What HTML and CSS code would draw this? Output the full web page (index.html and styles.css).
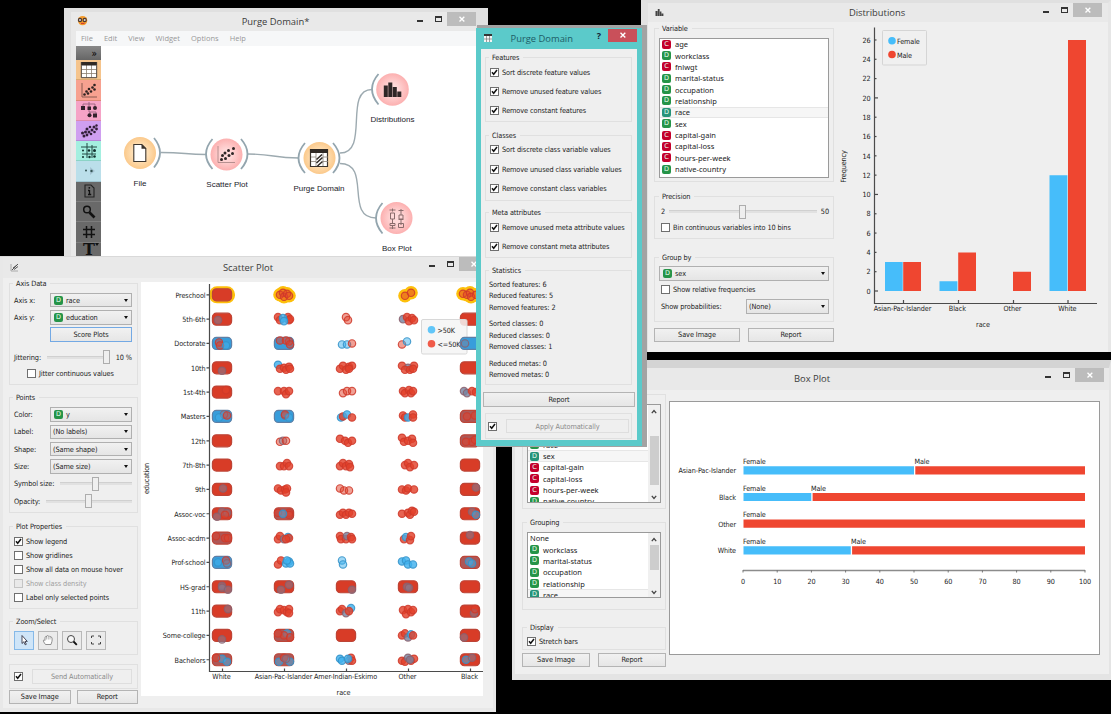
FILE: index.html
```html
<!DOCTYPE html>
<html lang="en">
<head>
<meta charset="utf-8">
<title>Orange - Purge Domain</title>
<link rel="stylesheet" href="styles.css">
</head>
<body>
<svg class="defs" width="0" height="0" aria-hidden="true">
  <symbol id="tick" viewBox="0 0 9 9"><path d="M2 4.2 3.7 6.3 7 2" fill="none" stroke="#111" stroke-width="1.5"/></symbol>
  <symbol id="up" viewBox="0 0 8 8"><path d="M1.8 5.2 4 2.6 6.2 5.2" fill="none" stroke="#444" stroke-width="1.3"/></symbol>
  <symbol id="down" viewBox="0 0 8 8"><path d="M1.8 2.8 4 5.4 6.2 2.8" fill="none" stroke="#444" stroke-width="1.3"/></symbol>
  <symbol id="cross" viewBox="0 0 8 8"><path d="M1.5 1.8 6.3 6.4M6.3 1.8 1.5 6.4" fill="none" stroke="#fff" stroke-width="1.4"/></symbol>
</svg>

<main class="desktop">

<section class="window w-canvas">
  <header class="titlebar">
    <span class="app-icon"><svg width="11" height="11" viewBox="0 0 11 11"><circle cx="5.6" cy="5.6" r="4.7" fill="#f49a2a"/><circle cx="3" cy="5" r="2.2" fill="#4a3a34"/><circle cx="7.7" cy="5" r="2.2" fill="#4a3a34"/><circle cx="3" cy="5" r="1" fill="#e8d9c8"/><circle cx="7.7" cy="5" r="1" fill="#e8d9c8"/><path d="M4 8.4h3.5" stroke="#c33" stroke-width="1"/></svg></span>
    <h1 class="title">Purge Domain*</h1>
    <div class="controls"><i class="min"></i><i class="max"></i><i class="close"><svg width="8" height="8"><use href="#cross"/></svg></i></div>
  </header>
  <nav class="menubar"><span>File</span><span>Edit</span><span>View</span><span>Widget</span><span>Options</span><span>Help</span></nav>
  <div class="workspace">
    <aside class="toolbox">
      <div class="tool head">»</div>
      <div class="tool t-data"><svg width="18" height="18" viewBox="0 0 18 18"><path d="M1 1h16v16H1z" fill="#fff"/><path d="M1.5 5v11.500h15V5M6.500 4v13M11.500 4v13M1 8.500h16M1 12.500h16" fill="none" stroke="#8a7f70" stroke-width=".8"/><path d="M1 1h16v3.500H1z" fill="#2f2924"/><path d="M1.300 1v15.700h15.400V1" fill="none" stroke="#4b443c" stroke-width=".8"/></svg></div>
      <div class="tool t-vis"><svg width="18" height="18" viewBox="0 0 18 18"><path d="M2 2v14h15" fill="none" stroke="#8a5a50" stroke-width="1"/><g fill="#2e2220"><circle cx="4.500" cy="13.500" r="1.300"/><circle cx="6.500" cy="10.500" r="1.300"/><circle cx="8" cy="12.500" r="1.300"/><circle cx="9" cy="8" r="1.300"/><circle cx="11" cy="10.500" r="1.300"/><circle cx="12.500" cy="6.500" r="1.300"/><circle cx="14.500" cy="8.500" r="1.300"/><circle cx="14.500" cy="4" r="1.300"/></g></svg></div>
      <div class="tool t-model"><svg width="18" height="18" viewBox="0 0 18 18"><path d="M3 6V3h12v3M9 1v5M9 9v2h7v2M10 11v3" fill="none" stroke="#8e5c77" stroke-width=".8"/><g fill="#33222c"><path d="M1 5h4v4H1zM7.500 5.500h3.500v3.500H7.500zM13 12.500h4v4h-4z"/><circle cx="15" cy="7" r="2"/><circle cx="9.500" cy="14.300" r="2"/></g></svg></div>
      <div class="tool t-unsup"><svg width="18" height="18" viewBox="0 0 18 18"><g fill="#33203a"><circle cx="2.500" cy="11" r="1.500"/><circle cx="4" cy="14" r="1.500"/><circle cx="5.500" cy="10" r="1.500"/><circle cx="7" cy="13" r="1.400"/><circle cx="7" cy="7" r="1.500"/><circle cx="9" cy="10" r="1.500"/><circle cx="11" cy="12" r="1.300"/><circle cx="10" cy="5" r="1.300"/><circle cx="12" cy="8" r="1.500"/><circle cx="14.500" cy="10" r="1.300"/><circle cx="14" cy="5" r="1.500"/><circle cx="16.500" cy="7" r="1.400"/><circle cx="16.500" cy="3.500" r="1.200"/></g></svg></div>
      <div class="tool t-eval"><svg width="18" height="18" viewBox="0 0 18 18"><path d="M1 5h16M7 1v15M2 12h14M12 3v13" stroke="#234a45" stroke-width="1"/><g fill="#12302c"><circle cx="3" cy="8.500" r="1"/><circle cx="3" cy="15" r="1"/><circle cx="9" cy="8.500" r="1.200"/><circle cx="14.500" cy="8.500" r="1.500"/><circle cx="14.500" cy="14.500" r="1.300"/><circle cx="9.500" cy="15" r="1.200"/></g></svg></div>
      <div class="tool t-extra"><svg width="18" height="18" viewBox="0 0 18 18"><path d="M10 5l5 4-5 4z" fill="#a5c4d2"/><circle cx="6" cy="8.500" r="1" fill="#355"/><circle cx="11.500" cy="9" r="1.200" fill="#355"/></svg></div>
      <div class="tool t-info"><svg width="18" height="18" viewBox="0 0 18 18"><path d="M5 3h6l3 3v9H5z" fill="none" stroke="#222" stroke-width="1.100"/><path d="M9.500 8v4.500M8 12.500h3.200M8 8.500h1.500" stroke="#111" stroke-width="1.300"/><circle cx="9.300" cy="5.800" r=".9" fill="#111"/></svg></div>
      <div class="tool"><svg width="18" height="18" viewBox="0 0 18 18"><circle cx="7" cy="6.500" r="3.300" fill="none" stroke="#111" stroke-width="1.500"/><path d="M9.500 9.500 14.500 14.500" stroke="#111" stroke-width="2.600"/></svg></div>
      <div class="tool"><svg width="18" height="18" viewBox="0 0 18 18"><path d="M6.500 3v12M11.500 3v12M3 6.500h12M3 11.500h12" stroke="#111" stroke-width="1.500"/></svg></div>
      <div class="tool last"><b class="t-letter">T</b><i class="t-arrow"></i></div>
    </aside>
    <svg class="flow" width="375" height="211" viewBox="101 46 375 211">
      <defs>
        <radialGradient id="go"><stop offset=".3" stop-color="#ffe7c4"/><stop offset="1" stop-color="#fbc98b"/></radialGradient>
        <radialGradient id="gr"><stop offset=".3" stop-color="#ffd9d9"/><stop offset="1" stop-color="#fcb0b0"/></radialGradient>
      </defs>
      <g fill="none" stroke="#9daab0" stroke-width="1.400">
        <path d="M161 152.500C185 152.500 185 154.500 206 154.500"/>
        <path d="M248 154C275 154 272 158 299 158"/>
        <path d="M340 153C370 153 343 89.500 372 89.500"/>
        <path d="M340 163.500C372 163.500 344 218 376 218"/>
      </g>
      <g fill="none" stroke="#93a5ae" stroke-width="1.800">
        <path d="M154 138Q166 152.500 154 167.500"/>
        <path d="M212.500 139Q199.500 154 212.500 169"/>
        <path d="M241 139Q254 154 241 169"/>
        <path d="M305 143Q292 158 305 173"/>
        <path d="M333 143Q346 158 333 173"/>
        <path d="M378.500 74Q365.500 89 378.500 104.500"/>
        <path d="M382.500 203Q369.500 218 382.500 233.500"/>
      </g>
      <circle cx="140" cy="153" r="16" fill="url(#go)"/>
      <circle cx="226.500" cy="154.500" r="16" fill="url(#gr)"/>
      <circle cx="319.500" cy="158" r="16" fill="url(#go)"/>
      <circle cx="392.500" cy="89.500" r="16.300" fill="url(#gr)"/>
      <circle cx="396.500" cy="218" r="16" fill="url(#gr)"/>
      <path d="M133.800 144.500h8l4 4v13h-12z" fill="#fff" stroke="#3c352e" stroke-width="1.100"/><path d="M141.500 144v4.800h4.800z" fill="#3c352e"/>
      <path d="M218 146v16.500h17" fill="none" stroke="#a58080" stroke-width=".8"/>
      <g fill="#2f2626"><circle cx="221.500" cy="159.500" r="1.500"/><circle cx="222.500" cy="155.500" r="1.500"/><circle cx="225.500" cy="158.500" r="1.500"/><circle cx="225" cy="153" r="1.500"/><circle cx="229" cy="155.500" r="1.500"/><circle cx="228.500" cy="150.500" r="1.500"/><circle cx="232.500" cy="153.500" r="1.500"/><circle cx="233.500" cy="148.500" r="1.500"/></g>
      <path d="M310.500 149.500h17v17h-17z" fill="#fff" stroke="#3a332c" stroke-width="1.200"/><path d="M310 149h18v4h-18z" fill="#2f2924"/><path d="M311 157h5M311 161.500h5M323 157h5M323 161.500h5M316 153v13M323 153v13" stroke="#8b8378" stroke-width=".8"/><path d="M316.500 159.500 322 154.500M316.500 163 322.500 157.500M317.500 166 322.500 161.500" stroke="#2f2924" stroke-width="1.500"/>
      <path d="M383.800 85.500h4v11.500h-4zM388.300 82.500h4v14.500h-4zM392.800 87h4v10h-4zM397.300 91.500h4v5.500h-4z" fill="#2f2626"/>
      <g stroke="#8a6c6c" stroke-width="1" fill="none"><path d="M392.500 208.500v3M392.500 219v4M401 209v6M401 220v5"/><path d="M390.500 213h4v6h-4zM389.500 210h6M389.500 228h6M390 223.500h5v2h-5zM392.500 225v4"/><path d="M398.500 210.500h5M399 215h4v4h-4zM398.500 223.500h5v4h-5zM398.500 219.500h5"/></g>
      <g class="node-label"><text x="140" y="185.500">File</text><text x="227" y="187">Scatter Plot</text><text x="319" y="191">Purge Domain</text><text x="392.500" y="122">Distributions</text><text x="396.800" y="251">Box Plot</text></g>
    </svg>
  </div>
</section>

<section class="window w-dist">
  <header class="titlebar">
    <span class="app-icon"><svg width="9" height="9" viewBox="0 0 9 9"><path d="M.5 3h2v5h-2zM2.800 1h1.800v7H2.800zM4.900 3.500h1.500V8H4.900zM6.600 5.500h1.800V8H6.600z" fill="#444"/></svg></span>
    <h1 class="title">Distributions</h1>
    <div class="controls"><i class="min"></i><i class="max"></i><i class="close"><svg width="8" height="8"><use href="#cross"/></svg></i></div>
  </header>
  <div class="client">
    <div class="panel">
      <div class="group g-variable"><h2 class="legend">Variable</h2>
        <ul class="list">
          <li><b class="c">C</b>age</li><li><b>D</b>workclass</li><li><b class="c">C</b>fnlwgt</li><li><b>D</b>marital-status</li><li><b>D</b>occupation</li><li><b>D</b>relationship</li><li class="on"><b>D</b>race</li><li><b>D</b>sex</li><li><b class="c">C</b>capital-gain</li><li><b class="c">C</b>capital-loss</li><li><b class="c">C</b>hours-per-week</li><li><b>D</b>native-country</li>
        </ul>
      </div>
      <div class="group g-precision"><h2 class="legend">Precision</h2>
        <div class="row"><span>2</span><span class="slider mid"><i></i></span><span>50</span></div>
        <label class="check"><i class="box"></i>Bin continuous variables into 10 bins</label>
      </div>
      <div class="group g-groupby"><h2 class="legend">Group by</h2>
        <div class="combo"><b>D</b>sex</div>
        <label class="check"><i class="box"></i>Show relative frequencies</label>
        <div class="row prob"><span>Show probabilities:</span><div class="combo">(None)</div></div>
      </div>
      <div class="buttons"><button>Save Image</button><button>Report</button></div>
    </div>
    <svg class="plot" id="dist" width="266" height="325" viewBox="836 22 266 325">
      <g class="axis"><path d="M874.500 27.500V303.500H1097M903.500 303v-3M958.500 303v-3M1013.500 303v-3M1068 303v-3"/></g>
      <g fill="#46bdfa"><path d="M885 262h17.700v29H885zM939.500 281.300h17.900v9.700h-17.900zM1049.500 175.200h17.900V291h-17.900z"/></g>
      <g fill="#ef4630"><path d="M903.200 262H921v29h-17.800zM958.200 252.400H976V291h-17.800zM1013 271.700h18V291h-18zM1068 40h18v251h-18z"/></g>
      <rect x="882.500" y="30.500" width="44" height="34.500" rx="1" fill="#f0f0f0" stroke="#d5d5d5"/>
      <circle cx="892" cy="40.800" r="3.800" fill="#46bdfa"/><circle cx="892" cy="54.500" r="3.800" fill="#ef4630"/>
      <text x="897" y="43.800">Female</text><text x="897" y="57.700">Male</text>
      <g class="mid"><text x="902.500" y="311">Asian-Pac-Islander</text><text x="957.300" y="311">Black</text><text x="1012.500" y="311">Other</text><text x="1067.300" y="311">White</text><text x="983" y="326.500">race</text><text transform="translate(846 166.500) rotate(-90)">Frequency</text></g>
    </svg>
  </div>
</section>

<section class="window w-box">
  <header class="titlebar">
    <span class="app-icon"></span>
    <h1 class="title">Box Plot</h1>
    <div class="controls"><i class="min"></i><i class="max"></i><i class="close"><svg width="8" height="8"><use href="#cross"/></svg></i></div>
  </header>
  <div class="client">
    <div class="panel">
      <div class="group g-variable">
        <div class="scrollbox">
          <ul class="list scrolled"><li><b>D</b>race</li><li class="on"><b>D</b>sex</li><li><b class="c">C</b>capital-gain</li><li><b class="c">C</b>capital-loss</li><li><b class="c">C</b>hours-per-week</li><li><b>D</b>native-country</li></ul>
          <div class="scrollbar"><svg width="8" height="8"><use href="#up"/></svg><i class="thumb tall"></i><svg class="end" width="8" height="8"><use href="#down"/></svg></div>
        </div>
      </div>
      <div class="group g-grouping"><h2 class="legend">Grouping</h2>
        <div class="scrollbox">
          <ul class="list"><li>None</li><li><b>D</b>workclass</li><li><b>D</b>marital-status</li><li><b>D</b>occupation</li><li><b>D</b>relationship</li><li class="on"><b>D</b>race</li></ul>
          <div class="scrollbar"><svg width="8" height="8"><use href="#up"/></svg><i class="thumb"></i><svg class="end" width="8" height="8"><use href="#down"/></svg></div>
        </div>
      </div>
      <div class="group g-display"><h2 class="legend">Display</h2>
        <label class="check"><i class="box"><svg><use href="#tick"/></svg></i>Stretch bars</label>
      </div>
      <div class="buttons"><button>Save Image</button><button>Report</button></div>
    </div>
    <svg class="plot sheet" width="429" height="252" viewBox="670 402 429 252">
      <g fill="#46bdfa"><path d="M743.500 466.200H914v8.200H743.500zM743.500 492.900H811.300v8.200H743.500zM743.500 546.300H850.800v8.200H743.500z"/></g>
      <g fill="#ef4630"><path d="M915.300 466.200H1085v8.200H915.300zM812.600 492.900H1085v8.200H812.600zM743.500 519.600H1085v8.200H743.500zM852.100 546.300H1085v8.200H852.100z"/></g>
      <path d="M743 570.500H1085" stroke="#8c8c8c" stroke-width="1.600"/>
      <g id="boxticks" class="mid"></g>
      <g><text x="743" y="464">Female</text><text x="914.500" y="464">Male</text><text x="743" y="490.500">Female</text><text x="811" y="490.500">Male</text><text x="743" y="517">Female</text><text x="743" y="544">Female</text><text x="851" y="544">Male</text></g>
      <g class="end"><text x="736" y="473">Asian-Pac-Islander</text><text x="736" y="499.800">Black</text><text x="736" y="526.500">Other</text><text x="736" y="553">White</text></g>
    </svg>
  </div>
</section>

<section class="window w-scatter">
  <header class="titlebar">
    <span class="app-icon"><svg width="9" height="9" viewBox="0 0 9 9"><path d="M1 1v7h7" fill="none" stroke="#999" stroke-width=".8"/><path d="M2 7 8 1M3 5l4-3M4 6.500l4-3" stroke="#555" stroke-width="1" fill="none"/></svg></span>
    <h1 class="title">Scatter Plot</h1>
    <div class="controls"><i class="min"></i><i class="max"></i><i class="close"><svg width="8" height="8"><use href="#cross"/></svg></i></div>
  </header>
  <div class="client">
    <div class="panel">
      <div class="group g-axis"><h2 class="legend">Axis Data</h2>
        <div class="field"><span>Axis x:</span><div class="combo"><b>D</b>race</div></div>
        <div class="field"><span>Axis y:</span><div class="combo"><b>D</b>education</div></div>
        <div class="field"><span></span><button class="focus">Score Plots</button></div>
        <div class="field jitter"><span>Jittering:</span><span class="slider full"><i></i></span><span class="pct">10 %</span></div>
        <label class="check"><i class="box"></i>Jitter continuous values</label>
      </div>
      <div class="group g-points"><h2 class="legend">Points</h2>
        <div class="field"><span>Color:</span><div class="combo"><b>D</b>y</div></div>
        <div class="field"><span>Label:</span><div class="combo">(No labels)</div></div>
        <div class="field"><span>Shape:</span><div class="combo">(Same shape)</div></div>
        <div class="field"><span>Size:</span><div class="combo">(Same size)</div></div>
        <div class="field symbol"><span>Symbol size:</span><span class="slider mid"><i></i></span></div>
        <div class="field opacity"><span>Opacity:</span><span class="slider mid"><i></i></span></div>
      </div>
      <div class="group g-props"><h2 class="legend">Plot Properties</h2>
        <label class="check"><i class="box"><svg><use href="#tick"/></svg></i>Show legend</label>
        <label class="check"><i class="box"></i>Show gridlines</label>
        <label class="check"><i class="box"></i>Show all data on mouse hover</label>
        <label class="check off"><i class="box"></i>Show class density</label>
        <label class="check"><i class="box"></i>Label only selected points</label>
      </div>
      <div class="group g-zoom"><h2 class="legend">Zoom/Select</h2>
        <div class="zoomtools">
          <i class="zt active"><svg width="12" height="12" viewBox="0 0 12 12"><path d="M4 1.500V9.500L5.800 7.800 7.200 10.800 8.300 10.300 7 7.400H9.300z" fill="#fff" stroke="#223" stroke-width=".8"/></svg></i>
          <i class="zt"><svg width="12" height="12" viewBox="0 0 12 12"><path d="M3.500 10.500C2 8.500 1 7 1.500 6.200S3 6.500 3 6.500V3.200Q3.800 2 4.600 3V2Q5.500 1 6.300 2.200Q7.300 1.300 8 2.800Q9.500 2.300 10 4C10.500 7 9.500 8.500 9 10.500z" fill="#fff" stroke="#777" stroke-width=".8"/><path d="M4.600 3v2.500M6.300 2.500v3M8 3v2.500" stroke="#888" stroke-width=".6"/></svg></i>
          <i class="zt"><svg width="12" height="12" viewBox="0 0 12 12"><circle cx="5" cy="5" r="3.500" fill="#f8f8f8" stroke="#444" stroke-width="1"/><path d="M7.500 7.500 10.800 10.800" stroke="#111" stroke-width="1.800"/></svg></i>
          <i class="zt"><svg width="12" height="12" viewBox="0 0 12 12"><path d="M1.500 4V2H4M8 2h2.500v2M10.500 8v2H8M4 10H1.500V8" fill="none" stroke="#444" stroke-width="1"/></svg></i>
        </div>
      </div>
      <div class="group auto"><i class="box"><svg><use href="#tick"/></svg></i><button class="off">Send Automatically</button></div>
      <div class="buttons"><button>Save Image</button><button>Report</button></div>
    </div>
    <svg class="plot white" width="342" height="414" viewBox="141 282 342 414">
      <g id="points"></g>
      <g class="axis"><path id="saxis" d=""/></g>
      <g class="end" id="ylabels"></g>
      <g class="mid" id="xlabels"></g>
      <g class="mid"><text x="343.500" y="694.500">race</text><text transform="translate(149 478.500) rotate(-90)">education</text></g>
      <rect x="421.500" y="319.500" width="45.500" height="34.500" rx="1.500" fill="#f4f4f4" fill-opacity=".85" stroke="#d8d8d8"/>
      <circle cx="431.500" cy="329.700" r="3.800" fill="#62c6f8"/><circle cx="431.500" cy="343.700" r="3.800" fill="#f05a48"/>
      <text x="437.500" y="333">&gt;50K</text><text x="437.500" y="346.800">&lt;=50K</text>
      <g id="over"></g>
    </svg>
  </div>
</section>

<section class="window w-purge">
  <header class="titlebar">
    <span class="app-icon"><svg width="8" height="8" viewBox="0 0 8 8"><path d="M0 0h8v8H0z" fill="#f4f4f4"/><path d="M0 0h8v2H0z" fill="#333"/><path d="M2.500 2v6M5.500 2v6M0 5h8" stroke="#777" stroke-width=".7"/></svg></span>
    <h1 class="title">Purge Domain</h1>
    <b class="help">?</b>
    <i class="close"><svg width="8" height="8"><use href="#cross"/></svg></i>
  </header>
  <div class="client">
    <div class="group g-feat"><h2 class="legend">Features</h2>
      <label class="check"><i class="box"><svg><use href="#tick"/></svg></i>Sort discrete feature values</label>
      <label class="check"><i class="box"><svg><use href="#tick"/></svg></i>Remove unused feature values</label>
      <label class="check"><i class="box"><svg><use href="#tick"/></svg></i>Remove constant features</label>
    </div>
    <div class="group g-class"><h2 class="legend">Classes</h2>
      <label class="check"><i class="box"><svg><use href="#tick"/></svg></i>Sort discrete class variable values</label>
      <label class="check"><i class="box"><svg><use href="#tick"/></svg></i>Remove unused class variable values</label>
      <label class="check"><i class="box"><svg><use href="#tick"/></svg></i>Remove constant class variables</label>
    </div>
    <div class="group g-meta"><h2 class="legend">Meta attributes</h2>
      <label class="check"><i class="box"><svg><use href="#tick"/></svg></i>Remove unused meta attribute values</label>
      <label class="check"><i class="box"><svg><use href="#tick"/></svg></i>Remove constant meta attributes</label>
    </div>
    <div class="group g-stats"><h2 class="legend">Statistics</h2>
      <p>Sorted features: 6<br>Reduced features: 5<br>Removed features: 2</p>
      <p>Sorted classes: 0<br>Reduced classes: 0<br>Removed classes: 1</p>
      <p>Reduced metas: 0<br>Removed metas: 0</p>
    </div>
    <button class="report">Report</button>
    <div class="group auto"><i class="box"><svg><use href="#tick"/></svg></i><button class="off">Apply Automatically</button></div>
  </div>
</section>

</main>
<script src="charts.js"></script>
</body>
</html>
```
FILE: styles.css
```css
* { box-sizing: border-box; }
body {
  margin: 0;
  background: #000;
  color: #1c1c1c;
  font: 7.3px "DejaVu Sans Condensed", "DejaVu Sans", sans-serif;
  letter-spacing: -0.1px;
}
h1, h2, p, ul { margin: 0; padding: 0; font-weight: normal; font-size: inherit; }
i { font-style: normal; display: block; flex: none; }
svg { display: block; flex: none; }
.defs { position: absolute; }
.desktop { position: relative; width: 1111px; height: 714px; overflow: hidden; }

/* windows */
.window { position: absolute; background: #efefef; display: flex; flex-direction: column; }
.w-canvas { left: 64px; top: 8px; width: 424px; height: 250px; background: #e9e9e9; border: solid #e0e0e0; border-width: 4px 12px 0 7px; }
.w-dist { left: 641px; top: 0; width: 470px; height: 352px; background: #efefef; border-left: 7px solid #e2e2e2; border-top: 3px solid #e0e0e0; border-right: 3px solid #e6e6e6; }
.w-box { left: 512px; top: 360px; width: 599px; height: 320px; border: solid #e4e4e4; border-width: 8px 2px 6px 3px; border-top-color: #d4d4d4; }
.w-scatter { left: 0; top: 257px; width: 496px; height: 455px; border: solid #e8e8e8; border-width: 0 3px 4px 3px; box-shadow: 0 -1px #d9d9d9; }
.w-purge { left: 476px; top: 28px; width: 166px; height: 417.500px; background: #5bcaca; padding: 0 5px 5.500px; box-shadow: 3px -1px 0 2px #a3a3a3; clip-path: inset(-4px -6px -3px 0); }

.titlebar { display: grid; grid-template-columns: 1fr auto 1fr; flex: none; height: 21px; background: #e9e9e9; }
.title { font: 9.400px "Open Sans", sans-serif; color: #3b3b3b; letter-spacing: 0; white-space: nowrap; }
.app-icon { padding: 5px 0 0 7px; }
.controls { display: flex; justify-content: flex-end; }
.min { width: 6px; height: 2px; background: #333; margin: 8px 12px 0 0; }
.max { width: 7px; height: 6px; border: 1px solid #333; border-top-width: 2px; margin: 4px 5px 0 0; }
.close { width: 29px; height: 13.500px; background: #bcbcbc; display: flex; align-items: center; justify-content: center; }

.w-canvas .titlebar { height: 19px; }
.w-canvas .app-icon { padding: 3px 0 0 6px; }
.w-canvas .title { line-height: 19px; transform: translateX(2px); }
.w-dist .titlebar { height: 19px; }
.w-dist .title { line-height: 19px; transform: translateX(-1px); }
.w-dist .controls { padding-right: 6px; }
.w-box .titlebar { height: 22px; }
.w-box .title { line-height: 21px; }
.w-box .controls { padding-right: 5px; }
.w-scatter .titlebar { height: 21px; }
.w-scatter .title { line-height: 21px; }
.w-scatter .app-icon { padding-top: 6px; }
.w-scatter .controls { padding-right: 5px; }

.client { display: flex; flex: 1; min-height: 0; }
.panel { display: flex; flex-direction: column; flex: none; }

/* shared widgets */
.group { display: flex; flex-direction: column; flex: none; border: 1px solid #e0e0e0; }
.legend { align-self: flex-start; background: #efefef; margin: -5px 0 0; padding: 0 4px 0 3px; height: 9px; line-height: 9px; }
.check { display: flex; align-items: center; gap: 3px; white-space: nowrap; }
.box { width: 9px; height: 9px; border: 1px solid #6f6f6f; background: #fff; }
.box svg { width: 9px; height: 9px; margin: -1px; }
.check.off { color: #a0a0a0; }
.check.off .box { border-color: #c4c4c4; background: #e9e9e9; }
button { font: inherit; letter-spacing: inherit; color: inherit; padding: 0; height: 14.500px; border: 1px solid #b4b4b4; border-radius: 0; background: linear-gradient(#f1f1f1, #e6e6e6); }
button.off { color: #8b8b8b; border-color: #dedede; background: #efefef; }
button.focus { border-color: #73a9e4; }
.combo { display: flex; align-items: center; height: 14.500px; padding-left: 2px; border: 1px solid #b0b0b0; background: linear-gradient(#f1f1f1, #e5e5e5); white-space: nowrap; flex: 1; }
.combo::after { content: ""; margin: 0 3px 0 auto; border: 2.600px solid transparent; border-top: 3.500px solid #111; border-bottom: 0; }
.list b, .combo b { width: 9px; height: 9px; border-radius: 2px; background: #259448; color: #e8fff0; font: 6.500px/9px "DejaVu Sans", sans-serif; text-align: center; margin-right: 4px; flex: none; letter-spacing: 0; }
.combo b { margin: 0 3px 0 1px; }
.list b.c { background: #c4002c; }
.list { list-style: none; font: 7.500px "Noto Sans", sans-serif; letter-spacing: 0; flex: 1; }
.list li { display: flex; align-items: center; height: 11.360px; padding-left: 2px; border: solid transparent; border-width: 1px 0; white-space: nowrap; }
.list li.on { background: #f6f6f6; border-color: #e6e6e6; }
.list li.on b { background: #26937a; }
.slider { position: relative; display: flex; align-items: center; flex: 1; height: 14px; }
.slider::before { content: ""; width: 100%; height: 2px; background: #e1e1e1; border-top: 1px solid #d0d0d0; }
.slider i { position: absolute; left: 50%; margin-left: -4px; width: 7px; height: 14px; border: 1px solid #adadad; background: #efefef; }
.slider.full i { left: 100%; }
.buttons { display: flex; gap: 8px; }
.buttons button { flex: 1; }
.auto { flex-direction: row; align-items: center; }
.auto button { flex: 1; }
.row, .field { display: flex; align-items: center; white-space: nowrap; }

/* plots */
.plot text { font: 7.200px "DejaVu Sans Condensed", "DejaVu Sans", sans-serif; fill: #1c1c1c; }
.mid text { text-anchor: middle; }
.end text { text-anchor: end; }
.axis path { fill: none; stroke: #4b4b4b; stroke-width: 1.200; }
.white { background: #fff; }
.sheet { background: #fff; border: 1px solid #9a9a9a; width: 431px; height: 254px; }

/* workflow window */
.menubar { display: flex; gap: 11px; height: 15px; line-height: 15px; padding-left: 5px; margin-left: 5px; background: #f6f7f8; color: #989898; font-family: "Open Sans", sans-serif; font-size: 7.500px; letter-spacing: 0; }
.workspace { display: flex; margin-left: 5px; }
.toolbox { width: 25px; display: flex; flex-direction: column; background: #666; height: 211px; overflow: hidden; }
.tool { height: 20.300px; flex: none; border-bottom: 1px solid #7d7d7d; display: flex; justify-content: center; align-items: center; background: #696969; }
.head { height: 14px; justify-content: flex-end; padding-right: 4px; font-size: 10px; color: #000; background: linear-gradient(#888, #666); border: 0; }
.t-data { background: #f5c48c; border-color: #dba970; }
.t-vis { background: #f7a190; border-color: #dc8877; }
.t-model { background: #f5a3c6; border-color: #dd8baf; }
.t-unsup { background: #cf9ff0; border-color: #b687d8; }
.t-eval { background: #a4efe0; border-color: #8bd3c6; }
.t-extra { background: #bbdfea; border-color: #9fc4d0; }
.t-letter { font: bold 16px/16px "DejaVu Serif", serif; color: #111; margin: -5px 0 0 5px; }
.t-arrow { border: 2px solid transparent; border-top: 3px solid #111; margin: -14px 0 0 0; }
.flow { background: #fff; }
.node-label text { font: 8px "Liberation Sans", sans-serif; text-anchor: middle; fill: #1a1a2a; letter-spacing: 0; }

/* distributions */
.w-dist .panel { width: 180px; margin: 6px 2px 0 6px; }
.w-dist .group { padding: 0 4px; }
.w-dist .g-variable { height: 154px; }
.w-dist .list { flex: none; height: 140px; margin-top: 4.500px; background: #fff; border: 1px solid #9a9a9a; overflow: hidden; }
.w-dist .g-precision { height: 43px; margin-top: 13.500px; }
.w-dist .g-precision .row { gap: 4px; padding: 0 0 0 2px; margin-top: 4px; height: 14px; }
.w-dist .g-precision .check { margin: 4.500px 0 0 2px; }
.w-dist .g-groupby { height: 65px; margin-top: 18px; }
.w-dist .g-groupby .combo { flex: none; margin-top: 4.500px; }
.w-dist .g-groupby .check { margin: 4.500px 0 0 2px; }
.w-dist .prob { padding-left: 2px; justify-content: space-between; margin-top: 5px; }
.w-dist .prob .combo { width: 83px; flex: none; margin: 0; }
.w-dist .buttons { margin-top: 6px; }

/* box plot */
.w-box .panel { width: 144px; margin: 4px 3px 0 7px; }
.w-box .plot { margin-top: 11px; }
.w-box .group { padding: 0 4px; }
.w-box .g-variable { height: 115px; }
.scrollbox { display: flex; border: 1px solid #9a9a9a; background: #fff; overflow: hidden; flex: none; }
.g-variable .scrollbox { height: 99px; margin-top: 9px; }
.g-grouping .scrollbox { height: 66px; margin-top: 5px; }
.w-box .g-grouping .list { margin-top: -0.500px; }
.w-box .scrolled { padding-top: 34px; }
.scrollbar { width: 12px; background: #f0f0f0; display: flex; flex-direction: column; align-items: center; padding: 3px 0 1px; }
.thumb { width: 9px; height: 25px; background: #cdcdcd; margin-top: 1px; }
.thumb.tall { height: 49px; margin-top: 20px; }
.scrollbar .end { margin-top: auto; }
.w-box .g-grouping { height: 88px; margin-top: 13px; }
.w-box .g-display { height: 23px; margin-top: 17px; }
.w-box .g-display .check { margin-top: 5px; }
.w-box .buttons { margin-top: 2.500px; }

/* scatter plot */
.w-scatter .panel { width: 129px; margin: 5px 3px 0 6px; }
.w-scatter .plot { margin-top: 4px; }
.w-scatter .group { padding: 0 5px 0 4px; }
.w-scatter .legend { margin-left: -1px; }
.field > span:first-child { width: 36px; flex: none; }
.field { height: 17.300px; }
.field button { flex: 1; }
.w-scatter .g-axis { height: 102px; }
.w-scatter .g-axis > .field:nth-of-type(1) { margin-top: 3.500px; }
.jitter { margin-top: 5px; }
.jitter .slider { margin-right: 9px; }
.w-scatter .jitter > span:first-child { width: 33px; }
.g-axis .check { margin: 3.500px 0 0 13px; height: 9px; }
.w-scatter .g-points { height: 116px; margin-top: 12px; }
.g-points > .field:nth-of-type(1) { margin-top: 4px; }
.w-scatter .symbol > span:first-child { width: 46px; }
.w-scatter .opacity > span:first-child { width: 32px; }
.w-scatter .g-props { height: 83px; margin-top: 12.500px; }
.g-props .check { height: 14.050px; }
.g-props .legend { margin-bottom: 3.500px; }
.w-scatter .g-zoom { height: 34.500px; margin-top: 12px; }
.zoomtools { display: flex; gap: 4.500px; margin-top: 5px; }
.zt { width: 19.500px; height: 19.500px; border: 1px solid #b8b8b8; background: #ebebeb; display: flex; align-items: center; justify-content: center; }
.zt.active { background: #cfe5f8; border-color: #86b9e8; }
.w-scatter .auto { height: 24.500px; margin-top: 9px; gap: 9px; }
.w-scatter .buttons { margin-top: 1px; gap: 6px; }

/* purge dialog */
.w-purge .titlebar { display: flex; background: none; height: 21px; }
.w-purge .app-icon { padding: 6px 0 0 3px; }
.w-purge .title { color: #1d5c66; margin-left: 18.500px; line-height: 21px; }
.w-purge .help { font: bold 9px/16px "Open Sans", sans-serif; margin-left: auto; margin-right: 7px; color: #123; }
.w-purge .close { background: #c9505a; margin-top: 0.500px; }
.w-purge .client { background: #efefef; flex-direction: column; padding: 8px 2px 0; }
.w-purge .group { margin: 0 3px 0 2px; padding: 0 4px; }
.w-purge .check { height: 19.400px; }
.g-feat { height: 65px; }
.w-purge .legend { margin-left: -1px; }
.w-purge .legend + .check { margin-top: 0.500px; }
.w-purge .g-class { height: 66px; margin-top: 12.500px; }
.w-purge .g-meta { height: 46px; margin-top: 11.500px; }
.w-purge .g-stats { height: 115px; margin-top: 12px; padding: 0 3px; }
.g-stats p { line-height: 11.400px; margin-bottom: 5.200px; }
.w-purge .g-stats .legend { margin: -5px 0 4px 0; }
.w-purge .report { height: 15px; margin-top: 7px; flex: none; }
.w-purge .auto { height: 26px; margin-top: 6px; gap: 9px; padding: 0 2px; }
```
FILE: charts.js
```js
const NS = "http://www.w3.org/2000/svg";
const el = (parent, name, attrs, text) => {
  const n = document.createElementNS(NS, name);
  for (const k in attrs) n.setAttribute(k, attrs[k]);
  if (text !== undefined) n.textContent = text;
  parent.appendChild(n);
  return n;
};
const $ = id => document.getElementById(id);

// Distributions: frequency axis
const dist = $("dist");
const distAxis = el(dist, "g", { class: "axis" });
const distLabels = el(dist, "g", { class: "end" });
for (let v = 0; v <= 26; v += 2) {
  const y = 291 - v * 9.655;
  el(distAxis, "path", { d: `M874.5 ${y}h${v % 10 ? 2 : 3.5}` });
  el(distLabels, "text", { x: 870.5, y: y + 2.7 }, v);
}

// Box plot: percentage axis
for (let v = 0; v <= 100; v += 10) {
  const x = 743 + v * 3.42;
  el($("boxticks"), "path", { d: `M${x} 570v2.5`, stroke: "#777" });
  el($("boxticks"), "text", { x, y: 584 }, v);
}

// Scatter plot. Each cell: "R"/"B"/"P" is a dense red/blue/mixed block,
// followed by circles as dx,dy,colour; "*" marks a selected cell.
const rows = [
  ["Preschool", "*R", "*-4,0,r -1,-2,r 0,2,r 3,-1,r 5,1,r", "", "*-3,1,r 3,-2,r", "*-7,-1,r -3,0,r 0,-2,r 1,2,r 6,0,r"],
  ["5th-6th", "R -4,1,p", "-6,-2,r -4,1,r 4,-2,r 5,1,r 6,0,r -1,-1,b 0,2,b", "0,-2,r 2,1,r", "-5,0,p -1,-2,r 1,2,r 4,-1,r 6,1,r", "R"],
  ["Doctorate", "B -3,-1,r -2,2,r 4,2,b", "B -4,-3,r 5,-2,r 2,-3,r 6,1,r", "-4,1,b 1,1,b 6,0,r", "-6,1,r -1,-2,b", "B -5,0,p"],
  ["10th", "R 0,3,p", "-6,-3,b -4,1,r 0,0,r 2,2,r 5,-1,r 6,1,r", "-6,1,r -3,-2,r 0,2,r 3,-1,r 6,-2,r 3,1,r", "-6,-2,r 6,-2,r 0,0,p -3,2,r 2,2,r 5,1,r", "R"],
  ["1st-4th", "R 4,-2,r", "-6,-1,r 0,-1,r 2,2,r 5,-1,r", "-3,1,r 1,-1,r 6,-1,r", "-5,-1,r -3,1,r 1,-2,r 3,1,r 5,-1,r", "-6,-1,p -3,1,p 2,-1,r 6,0,r"],
  ["Masters", "B 2,-2,p -3,1,b 5,-1,r", "B 1,-1,p 1,-2,r 5,1,b", "-5,1,b -3,0,r 1,-2,b 6,1,r", "-5,-1,r -3,1,r 0,1,b 5,-2,r 5,1,r", "P -3,0,r 5,-1,r"],
  ["12th", "R", "-4,1,r -1,0,p 2,0,r", "-6,-2,r -1,0,r 2,2,r 6,0,r", "-6,-3,r -4,1,r 0,0,r 4,-2,r 5,2,r", "P 2,1,r -4,1,r 5,-1,r"],
  ["7th-8th", "R", "-4,1,r 0,1,r 3,-2,r 5,1,r", "-6,1,r -3,-2,r 0,1,r 3,-1,r 4,2,r", "-3,0,r 0,-2,r 2,2,r 6,0,r", "R"],
  ["9th", "R 1,-1,p", "-6,-1,r -3,1,r 1,0,r 3,-1,r 2,3,r", "-6,-1,r -2,1,r 3,1,r", "-6,0,r -2,1,r 0,-1,r 6,0,r", "R 6,-2,p"],
  ["Assoc-voc", "R 0,-2,p 5,-1,p -5,3,p 3,1,r", "P -6,-1,r 5,-1,r 5,1,r -1,0,b", "-6,1,r -3,-1,r 0,1,r 3,-1,r 6,0,r", "-6,0,r 0,-1,r 2,1,r 4,-3,r 6,-2,r", "R 2,-2,p 6,1,b"],
  ["Assoc-acdm", "P 3,0,r 6,0,r -6,-2,r", "-6,1,r -4,-2,r 4,-1,b 0,1,p 5,0,r 2,1,r", "-6,-2,r -5,1,r 0,1,r 1,-2,p 5,-1,r 6,1,r", "-4,1,r -2,-1,b 2,2,r 3,-2,r", "R 0,-3,p"],
  ["Prof-school", "B 4,-2,r 5,1,p -4,0,b", "-6,2,r -3,-2,r 2,1,b 5,-1,b 6,1,b 3,-2,b", "-4,-2,b -3,2,b", "-6,-1,b -2,-2,b 0,2,b 5,2,b", "P -1,-1,b 2,1,b"],
  ["HS-grad", "R 0,-1,p 0,1,p 6,3,p", "R -3,3,p 5,-2,p", "R 6,3,p", "R -1,0,p 1,1,p", "R"],
  ["11th", "R 6,-2,p", "-6,1,r -4,-2,r 0,-1,r 3,1,r 5,-2,r 5,2,r", "-6,0,r -4,-2,r 5,-3,b 0,2,p 3,0,r", "-5,-1,r -2,3,r 0,-2,r 3,1,r 5,-1,r", "R 4,2,p 5,-2,r"],
  ["Some-college", "R 0,4,p", "P 3,-2,b 0,0,r -6,-2,r 6,2,r", "R", "-6,0,r -3,-2,r 0,2,p 3,-1,b 5,0,r", "R -6,2,p"],
  ["Bachelors", "P 0,-1,b 5,2,b -6,-2,r", "P -5,2,b 6,2,b 0,-2,r 2,-1,p", "-6,-1,b -4,1,b 5,-2,r 3,1,p 6,1,r 2,-1,b", "-6,1,r -3,2,r 0,-2,p 3,1,r 6,-1,r 2,0,p", "R -4,0,b 2,-2,p"]
];
const columns = ["White", "Asian-Pac-Islander", "Amer-Indian-Eskimo", "Other", "Black"];
const fills = { r: "#e2412b", b: "#3fb1ee", p: "#7884a0" };
const strokes = { r: "#cf3a2a", b: "#3492c8", p: "#8b5f6c" };
const blocks = { R: "#d83c27", B: "#389ddb", P: "#ad5756" };

let axis = "M209.500 284V671.500H483";
rows.forEach(([label, ...cells], i) => {
  const cy = 294.8 + i * 24.33;
  axis += `M209.500 ${cy}h-3`;
  el($("ylabels"), "text", { x: 205.5, y: cy + 2.9 }, label);
  cells.forEach((cell, j) => {
    if (!cell) return;
    const cx = 222 + j * 62;
    const target = $(i === 2 && j === 4 ? "over" : "points");
    const selected = cell[0] === "*";
    const parts = cell.replace("*", "").split(" ");
    const dense = blocks[parts[0]] ? parts.shift() : null;
    const dots = parts.map(p => p.split(","));
    if (selected) {
      if (dense) el(target, "rect", { x: cx - 13, y: cy - 8.5, width: 26, height: 17, rx: 8, fill: "#fdbf0b" });
      dots.forEach(([dx, dy]) => el(target, "circle", { cx: cx + +dx, cy: cy + +dy, r: 6.8, fill: "#fdbf0b" }));
    }
    if (dense) {
      el(target, "rect", { x: cx - 9.6, y: cy - 6, width: 19.2, height: 12, rx: 4, fill: blocks[dense], stroke: dense === "B" ? "#5f7fa5" : "#bd4436", "stroke-width": 1.2 });
    }
    const crowded = !dense && dots.length > 3;
    dots.forEach(([dx, dy, c]) => el(target, "circle", {
      cx: cx + +dx, cy: cy + +dy, r: 3.7, fill: fills[c],
      "fill-opacity": crowded && !selected ? 0.82 : 0.5,
      stroke: strokes[c], "stroke-width": 1.2, "stroke-opacity": 0.85
    }));
  });
});
columns.forEach((label, j) => {
  const x = 222 + j * 62;
  axis += `M${x + 0.5} 671.500v-3`;
  el($("xlabels"), "text", { x: x - 0.5, y: 679.3 }, label);
});
$("saxis").setAttribute("d", axis);
```
